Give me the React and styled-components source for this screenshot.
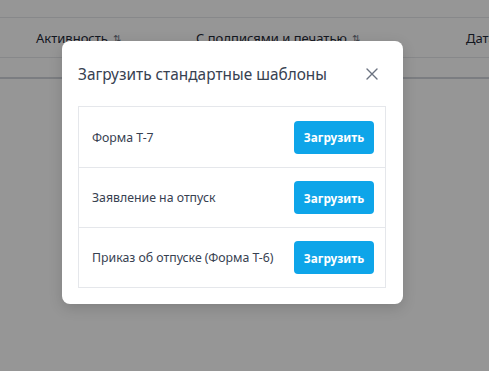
import React from "react";
import styled, { createGlobalStyle } from "styled-components";

const Global = createGlobalStyle`
  html, body { margin: 0; padding: 0; background: #fff; }
  body { font-family: "Noto Sans", "Open Sans", sans-serif; width: 489px; height: 371px; overflow: hidden; }
  * { box-sizing: border-box; }
`;

const Page = styled.div`
  position: relative;
  width: 489px;
  height: 371px;
  overflow: hidden;
  background: #fff;
`;

const TopBar = styled.div`
  height: 18px;
  border-bottom: 1px solid #e5e7eb;
`;

const HeaderRow = styled.div`
  display: grid;
  grid-template-columns: 160px 270px 100px;
  height: 40px;
  align-items: center;
  padding-left: 36px;
  border-bottom: 1px solid #e5e7eb;
  font-size: 13px;
  color: #1f2937;
  white-space: nowrap;
`;

const HeadCell = styled.div`
  display: flex;
  align-items: center;
  gap: 5px;
`;

const Sort = styled.span`
  font-size: 10px;
  color: #6b7280;
`;

const FilterRow = styled.div`
  height: 21px;
  border-bottom: 2px solid #d1d5db;
`;

const Overlay = styled.div`
  position: absolute;
  inset: 0;
  background: rgba(0, 0, 0, 0.41);
  padding: 41px 0 0 62px;
`;

const Modal = styled.div`
  width: 341px;
  background: #fff;
  border-radius: 8px;
  box-shadow: 0 4px 14px rgba(0, 0, 0, 0.15);
  padding: 16px 17px 16px 16px;
`;

const ModalHeader = styled.div`
  display: flex;
  align-items: center;
  justify-content: space-between;
  height: 34px;
  margin-bottom: 15px;
`;

const Title = styled.h2`
  margin: 0;
  font-size: 15.4px;
  font-weight: 400;
  color: #374151;
`;

const Close = styled.button`
  border: 0;
  background: none;
  padding: 0;
  margin-right: 7px;
  width: 14px;
  height: 14px;
  display: flex;
  align-items: center;
  justify-content: center;
  color: #6b7280;
`;

const List = styled.div`
  border: 1px solid #e5e7eb;
`;

const Row = styled.div`
  display: flex;
  align-items: center;
  justify-content: space-between;
  height: 60px;
  padding: 0 11px 0 13px;
  border-top: ${(p) => (p.$first ? "none" : "1px solid #e5e7eb")};
`;

const RowText = styled.span`
  font-size: 12.3px;
  color: #374151;
`;

const Button = styled.button`
  width: 80px;
  height: 33px;
  border: 0;
  border-radius: 4px;
  background: #0ea5e9;
  color: #fff;
  font-family: inherit;
  font-size: 11.8px;
  font-weight: 700;
  padding: 0;
`;

const items = ["Форма Т-7", "Заявление на отпуск", "Приказ об отпуске (Форма Т-6)"];

export default function App() {
  return (
    <Page>
      <Global />
      <TopBar />
      <HeaderRow>
        <HeadCell>Активность <Sort>⇅</Sort></HeadCell>
        <HeadCell>С подписями и печатью <Sort>⇅</Sort></HeadCell>
        <HeadCell>Дата</HeadCell>
      </HeaderRow>
      <FilterRow />
      <Overlay>
        <Modal>
          <ModalHeader>
            <Title>Загрузить стандартные шаблоны</Title>
            <Close aria-label="Закрыть">
              <svg width="12" height="12" viewBox="0 0 12 12">
                <path d="M1 1L11 11M11 1L1 11" stroke="currentColor" strokeWidth="1.4" strokeLinecap="round" />
              </svg>
            </Close>
          </ModalHeader>
          <List>
            {items.map((t, i) => (
              <Row key={t} $first={i === 0}>
                <RowText>{t}</RowText>
                <Button>Загрузить</Button>
              </Row>
            ))}
          </List>
        </Modal>
      </Overlay>
    </Page>
  );
}
